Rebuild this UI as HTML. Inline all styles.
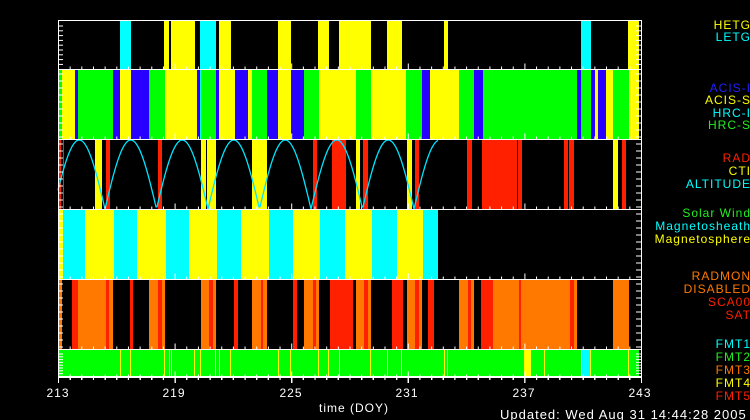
<!DOCTYPE html>
<html><head><meta charset="utf-8"><style>
html,body{margin:0;padding:0;background:#000;width:750px;height:420px;overflow:hidden}
svg{display:block}
text{font-family:"Liberation Sans","DejaVu Sans",sans-serif;font-size:12px;letter-spacing:1px}
</style></head><body>
<svg id="s" width="750" height="420" xmlns="http://www.w3.org/2000/svg">
<g id="bars"></g>
<g id="frame" stroke="#fff" fill="none"></g>
<g text-anchor="end">
<text x="751" y="29" fill="#ffff00">HETG</text>
<text x="751" y="41" fill="#00ffff">LETG</text>
<text x="751" y="92" fill="#2020ff">ACIS-I</text>
<text x="751" y="104" fill="#ffff00">ACIS-S</text>
<text x="751" y="117" fill="#00ffff">HRC-I</text>
<text x="751" y="129" fill="#22ee22">HRC-S</text>
<text x="751" y="162" fill="#ff2000">RAD</text>
<text x="751" y="175" fill="#ffff00">CTI</text>
<text x="751" y="188" fill="#00ffff">ALTITUDE</text>
<text x="751" y="217" fill="#22ee22">Solar Wind</text>
<text x="751" y="230" fill="#00ffff">Magnetosheath</text>
<text x="751" y="243" fill="#ffff00">Magnetosphere</text>
<text x="751" y="280" fill="#ff7800">RADMON</text>
<text x="751" y="293" fill="#ff7800">DISABLED</text>
<text x="751" y="306" fill="#ff2000">SCA00</text>
<text x="751" y="319" fill="#ff2000">SAT</text>
<text x="751" y="348" fill="#00ffff">FMT1</text>
<text x="751" y="361" fill="#22ee22">FMT2</text>
<text x="751" y="374" fill="#ff7800">FMT3</text>
<text x="751" y="387" fill="#ffff00">FMT4</text>
<text x="751" y="400" fill="#ff2000">FMT5</text>
</g>
<g fill="#fff" text-anchor="middle" style="font-size:13px">
<text x="58" y="397">213</text>
<text x="174" y="397">219</text>
<text x="291" y="397">225</text>
<text x="407" y="397">231</text>
<text x="524" y="397">237</text>
<text x="640" y="397">243</text>
<text x="354" y="412">time (DOY)</text>
</g>
<text x="500" y="419" fill="#fff" style="font-size:13px">Updated: Wed Aug 31 14:44:28 2005</text>
</svg>
<script>
var Y='#ffff00',C='#00ffff',B='#2800ff',G='#00ff00',R='#ff2000',O='#ff7800';
var P=[[21,69],[69,139],[139,209],[209,279],[279,349],[349,377]];
var d=[
[[120,131,C],[164,169,Y],[171,195,Y],[200,216,C],[219,231,Y],[278,291,Y],[318,329,Y],[339,371,Y],[387,402,Y],[444,448,Y],[581,591,C],[628,639,Y]],
[[58,62,G],[62,75,Y],[75,78,B],[78,113,G],[113,120,B],[120,131,Y],[131,149,B],[149,165,G],[165,197,Y],[197,200,B],[200,216,G],[200,201,C],[216,219,B],[219,235,Y],[235,248,B],[248,252,Y],[252,267,G],[267,278,B],[278,291,Y],[291,304,B],[304,319,G],[319,356,Y],[356,371,G],[371,406,Y],[406,422,G],[422,430,B],[430,459,Y],[459,474,G],[474,483,B],[483,577,G],[577,581,B],[581,591,G],[591,595,B],[595,598,Y],[598,606,B],[606,613,Y],[613,629,G],[629,639,Y]],
[[58,61,R],[63,64,R],[95,102,Y],[106,110,R],[158,162,R],[201,206,Y],[207,216,Y],[252,267,Y],[313,317,R],[332,346,R],[356,360,Y],[363,368,R],[407,412,Y],[415,419,R],[467,472,R],[482,517,R],[518,522,R],[564,568,R],[569,574,R],[613,618,Y],[622,626,R]],
[[58,63,Y],[63,85,C],[85,114,Y],[114,137,C],[137,166,Y],[166,189,C],[189,217,Y],[217,241,C],[241,269,Y],[269,293,C],[293,320,Y],[320,345,C],[345,372,Y],[372,397,C],[397,423,Y],[423,438,C]],
[[58,62,O],[72,78,R],[78,106,O],[106,109,R],[109,113,O],[130,133,R],[149,158,O],[158,162,R],[162,165,O],[201,209,O],[209,213,R],[213,216,O],[234,238,R],[252,261,O],[261,263,R],[263,267,O],[293,297,R],[304,313,O],[313,316,R],[316,319,O],[330,353,R],[356,364,O],[364,368,R],[368,371,O],[392,403,R],[407,415,O],[415,419,R],[419,422,O],[428,434,R],[459,468,O],[468,471,R],[471,474,O],[481,493,R],[493,570,O],[519,521,R],[570,574,R],[574,577,O],[613,629,O]],
[[58,639,G],[524,531,Y],[582,590,C]]
];
var fl=[120,130,164,169,171,194,200,215,219,230,278,290,318,328,339,370,387,401,444,447,544,581,590,628];
var ns='http://www.w3.org/2000/svg',g=document.getElementById('bars'),f=document.getElementById('frame');
function el(p,t,a){var e=document.createElementNS(ns,t);for(var k in a)e.setAttribute(k,a[k]);p.appendChild(e);return e;}
d.forEach(function(L,i){L.forEach(function(r){el(g,'rect',{x:r[0],y:P[i][0],width:r[1]-r[0],height:P[i][1]-P[i][0],fill:r[2]});});});
fl.forEach(function(x){el(g,'rect',{x:x,y:349,width:1,height:28,fill:Y});});
var pts=[];for(var x=58;x<=438;x+=1){var y=209-69*Math.abs(Math.sin(Math.PI*(x-105)/51.5));pts.push(x+','+y.toFixed(1));}
el(g,'polyline',{points:pts.join(' '),fill:'none',stroke:'#00e5ff','stroke-width':1.3});
el(f,'rect',{x:58.5,y:20.5,width:583,height:356});
P.forEach(function(p){el(f,'line',{x1:58,x2:642,y1:p[1]+.5,y2:p[1]+.5});});
for(var i=0;i<=50;i++){var x=58.5+i*583/50;var h=(i%10==0)?6:3;
P.forEach(function(p){el(f,'line',{x1:x,x2:x,y1:p[1]+.5,y2:p[1]+.5-h});el(f,'line',{x1:x,x2:x,y1:377,y2:377+h});});}
P.forEach(function(p){for(var y=p[0]+5;y<p[1];y+=(p[1]-p[0])/10){el(f,'line',{x1:58,x2:63,y1:y,y2:y});el(f,'line',{x1:636,x2:642,y1:y,y2:y});}});
</script>
</body></html>
